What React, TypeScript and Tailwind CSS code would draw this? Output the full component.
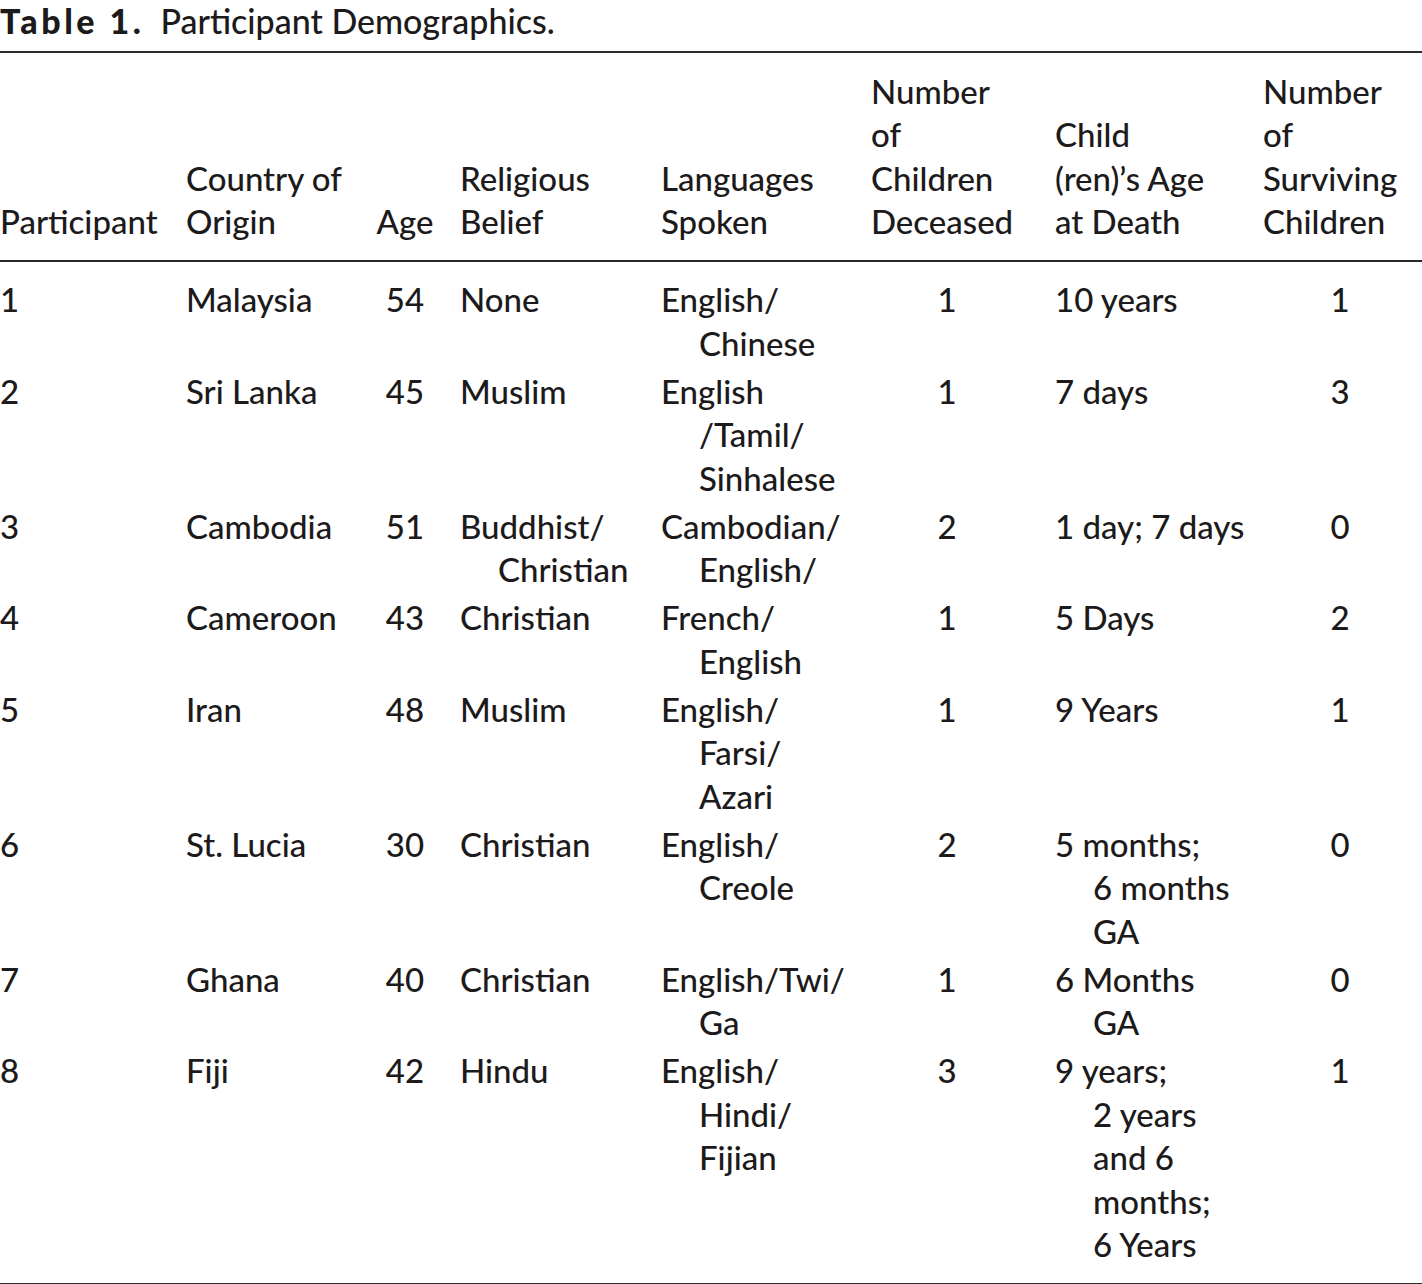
import React from 'react';

type Row = {
  id: string;
  country: string;
  age: string;
  religion: string[];
  languages: string[];
  deceased: string;
  ageAtDeath: string[];
  surviving: string;
};

const rows: Row[] = [
  { id: '1', country: 'Malaysia', age: '54', religion: ['None'], languages: ['English/', 'Chinese'], deceased: '1', ageAtDeath: ['10 years'], surviving: '1' },
  { id: '2', country: 'Sri Lanka', age: '45', religion: ['Muslim'], languages: ['English', '/Tamil/', 'Sinhalese'], deceased: '1', ageAtDeath: ['7 days'], surviving: '3' },
  { id: '3', country: 'Cambodia', age: '51', religion: ['Buddhist/', 'Christian'], languages: ['Cambodian/', 'English/'], deceased: '2', ageAtDeath: ['1 day; 7 days'], surviving: '0' },
  { id: '4', country: 'Cameroon', age: '43', religion: ['Christian'], languages: ['French/', 'English'], deceased: '1', ageAtDeath: ['5 Days'], surviving: '2' },
  { id: '5', country: 'Iran', age: '48', religion: ['Muslim'], languages: ['English/', 'Farsi/', 'Azari'], deceased: '1', ageAtDeath: ['9 Years'], surviving: '1' },
  { id: '6', country: 'St. Lucia', age: '30', religion: ['Christian'], languages: ['English/', 'Creole'], deceased: '2', ageAtDeath: ['5 months;', '6 months', 'GA'], surviving: '0' },
  { id: '7', country: 'Ghana', age: '40', religion: ['Christian'], languages: ['English/Twi/', 'Ga'], deceased: '1', ageAtDeath: ['6 Months', 'GA'], surviving: '0' },
  { id: '8', country: 'Fiji', age: '42', religion: ['Hindu'], languages: ['English/', 'Hindi/', 'Fijian'], deceased: '3', ageAtDeath: ['9 years;', '2 years', 'and 6', 'months;', '6 Years'], surviving: '1' },
];

function Hanging({ lines }: { lines: string[] }) {
  return (
    <>
      {lines.map((l, i) => (
        <span key={i} className={`block whitespace-nowrap ${i > 0 ? 'pl-[38px]' : ''}`}>{l}</span>
      ))}
    </>
  );
}

export default function App() {
  return (
    <div className="w-[1422px] bg-white font-medium text-[#1c1a1b]" style={{ fontFamily: 'Lato, "Open Sans", sans-serif' }}>
      <div className="h-[51px] text-[34px] leading-[41px] whitespace-nowrap">
        <span className="font-black tracking-[3.5px]">Table 1.</span>
        <span className="ml-[16px]">Participant Demographics.</span>
      </div>
      <div className="h-[2px] bg-[#2a2a2a]" />
      <table className="w-[1422px] table-fixed border-collapse text-[33px] leading-[43.5px]">
        <colgroup>
          <col className="w-[186px]" />
          <col className="w-[180px]" />
          <col className="w-[94px]" />
          <col className="w-[201px]" />
          <col className="w-[210px]" />
          <col className="w-[184px]" />
          <col className="w-[208px]" />
          <col className="w-[159px]" />
        </colgroup>
        <thead>
          <tr className="border-b-2 border-[#2a2a2a] align-bottom">
            <th className="pt-[16.5px] pb-[16.5px] text-left font-medium whitespace-nowrap">Participant</th>
            <th className="pt-[16.5px] pb-[16.5px] text-left font-medium whitespace-nowrap">Country of<br />Origin</th>
            <th className="pt-[16.5px] pb-[16.5px] pr-[16px] text-center font-medium">Age</th>
            <th className="pt-[16.5px] pb-[16.5px] text-left font-medium whitespace-nowrap">Religious<br />Belief</th>
            <th className="pt-[16.5px] pb-[16.5px] text-left font-medium whitespace-nowrap">Languages<br />Spoken</th>
            <th className="pt-[16.5px] pb-[16.5px] text-left font-medium whitespace-nowrap">Number<br />of<br />Children<br />Deceased</th>
            <th className="pt-[16.5px] pb-[16.5px] text-left font-medium whitespace-nowrap">Child<br />(ren)’s Age<br />at Death</th>
            <th className="pt-[16.5px] pb-[16.5px] text-left font-medium whitespace-nowrap">Number<br />of<br />Surviving<br />Children</th>
          </tr>
        </thead>
        <tbody>
          {rows.map((r, i) => {
            const pt = i === 0 ? 'pt-[16px]' : 'pt-[2.25px]';
            const pb = i === rows.length - 1 ? 'pb-[16px]' : 'pb-[2.25px]';
            const cell = `${pt} ${pb} align-top`;
            return (
              <tr key={r.id} className={i === rows.length - 1 ? 'border-b-2 border-[#2a2a2a]' : ''}>
                <td className={`${cell} text-left`}>{r.id}</td>
                <td className={`${cell} text-left whitespace-nowrap`}>{r.country}</td>
                <td className={`${cell} pr-[16px] text-center`}>{r.age}</td>
                <td className={cell}><Hanging lines={r.religion} /></td>
                <td className={cell}><Hanging lines={r.languages} /></td>
                <td className={`${cell} pr-[32px] text-center`}>{r.deceased}</td>
                <td className={cell}><Hanging lines={r.ageAtDeath} /></td>
                <td className={`${cell} pr-[5px] text-center`}>{r.surviving}</td>
              </tr>
            );
          })}
        </tbody>
      </table>
    </div>
  );
}
